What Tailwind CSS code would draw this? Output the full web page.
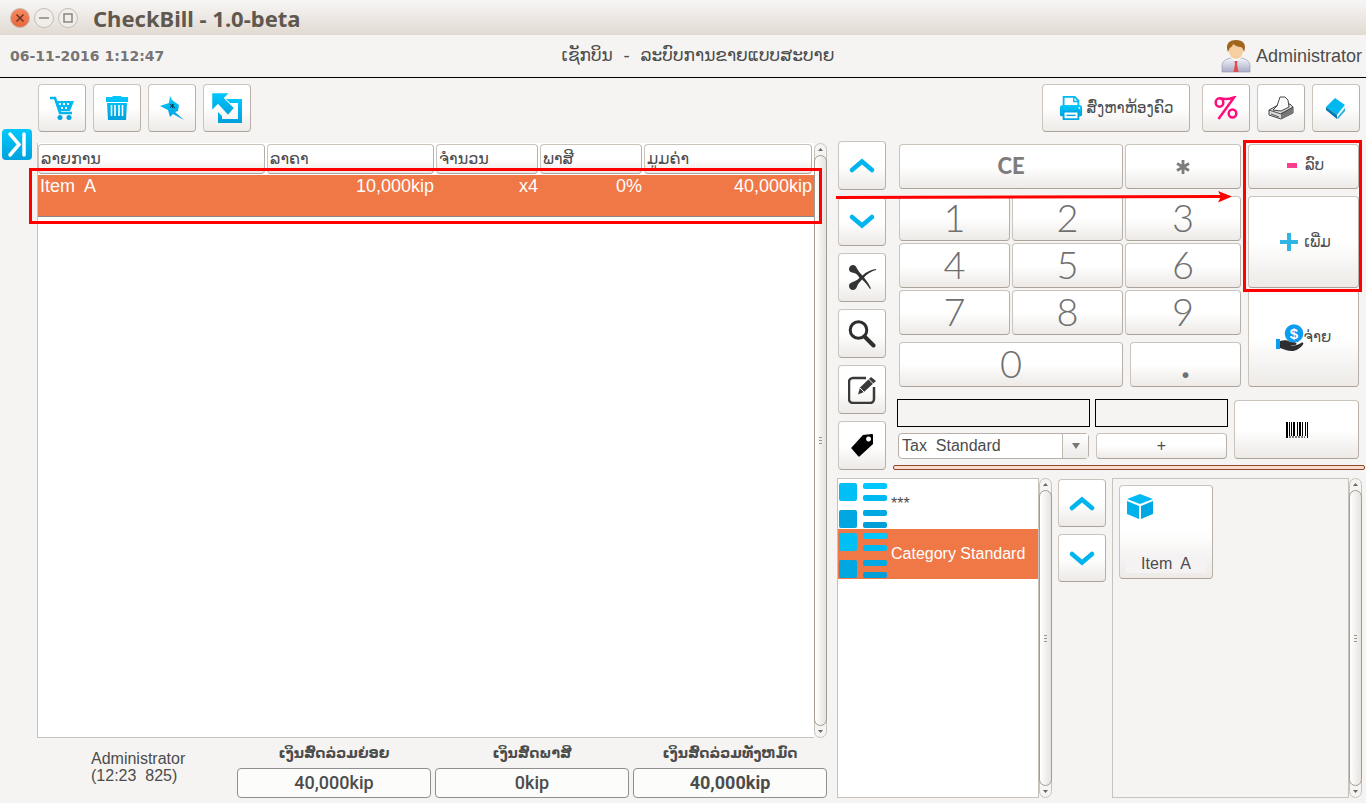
<!DOCTYPE html>
<html lang="lo">
<head>
    <meta charset="UTF-8">
    <meta name="viewport" content="width=device-width, initial-scale=1.0">
    <title>CheckBill - 1.0-beta</title>
    <script src="https://cdn.jsdelivr.net/npm/@tailwindcss/browser@4"></script>
    <script>
        document.addEventListener("DOMContentLoaded", () => {
            const raised = ["rounded-sm", "border", "border-[#cbc4bc]", "border-b-[#aba29a]", "border-r-[#b8b0a8]", "bg-linear-to-b", "from-white", "from-50%", "to-[#edeae7]"];

            // number keys
            const keys = document.getElementById("keys");
            for (let n = 1; n <= 9; n++) {
                const key = document.createElement("button");
                key.className = "raised h-[45px] pb-1 font-[Lato,sans-serif] text-[38px] leading-none font-light text-[#707070]";
                key.textContent = n;
                keys.appendChild(key);
            }

            document.querySelectorAll(".raised").forEach(el => el.classList.add(...raised));

            // scrollbars
            document.querySelectorAll(".scrollbar").forEach(bar => {
                bar.innerHTML = `
                    <svg class="mx-auto my-1 h-[3px] w-[5px] shrink-0" viewBox="0 0 5 3"><path d="M0 3h5L2.5 0z" fill="#6b6762"/></svg>
                    <div class="-mx-px flex flex-1 flex-col items-center justify-center gap-0.5 rounded-full border border-[#a39b92] bg-linear-to-r from-white to-[#e6e3df]">
                        <i class="h-px w-[3px] bg-[#9a958f]"></i><i class="h-px w-[3px] bg-[#9a958f]"></i><i class="h-px w-[3px] bg-[#9a958f]"></i>
                    </div>
                    <svg class="mx-auto my-1 h-[3px] w-[5px] shrink-0" viewBox="0 0 5 3"><path d="M0 0h5L2.5 3z" fill="#6b6762"/></svg>`;
            });
        });
    </script>
</head>
<body class="flex h-screen flex-col overflow-hidden bg-[#f5f4f2] font-['Liberation_Sans','DejaVu_Sans',sans-serif] text-[#4c4c4c]">
    <svg class="absolute h-0 w-0" aria-hidden="true">
        <defs>
            <linearGradient id="blue" x1="0" y1="0" x2="0" y2="1"><stop offset="0" stop-color="#00c8ff"/><stop offset="1" stop-color="#00a0dc"/></linearGradient>
            <linearGradient id="orange" x1="0" y1="0" x2="0" y2="1"><stop offset="0" stop-color="#f58a62"/><stop offset="1" stop-color="#e9663a"/></linearGradient>
            <linearGradient id="shirt" x1="0" y1="0" x2="0" y2="1"><stop offset="0" stop-color="#f3f4fa"/><stop offset="1" stop-color="#a9abc6"/></linearGradient>
            <g id="list-icon">
                <rect x="1" y="4" width="18" height="18" rx="2" fill="#00bff5"/><rect x="1" y="31" width="18" height="18" rx="2" fill="#00a6df"/>
                <rect x="25" y="4" width="24" height="6" rx="2" fill="#00c8ff"/><rect x="25" y="16" width="24" height="6" rx="2" fill="#00b9f0"/>
                <rect x="25" y="31" width="24" height="6" rx="2" fill="#00a9e2"/><rect x="25" y="43" width="24" height="6" rx="2" fill="#009fd8"/>
            </g>
            <path id="up" d="M2 12 12 3.500l10 8.500" fill="none" stroke="#00b4ee" stroke-width="4.500" stroke-linecap="round"/>
            <path id="down" d="M2 3l10 8.500L22 3" fill="none" stroke="#00b4ee" stroke-width="4.500" stroke-linecap="round"/>
        </defs>
    </svg>

    <!-- window title bar -->
    <div class="flex h-[35px] shrink-0 items-center rounded-t-lg bg-linear-to-b from-[#f7f6f5] to-[#e2dad2] pl-2">
        <svg class="h-6 w-[72px]" viewBox="0 0 72 24">
            <g stroke="#c4bcb4" fill="#f0eeeb"><circle cx="12" cy="12" r="9.500" fill="url(#orange)"/><circle cx="36" cy="12" r="9.500"/><circle cx="60" cy="12" r="9.500"/></g>
            <path d="M8.500 8.500l7 7M15.500 8.500l-7 7" stroke="#6a3424" stroke-width="1.500"/>
            <path d="M31 12h10M56 8h8v8h-8z" fill="none" stroke="#8b847b" stroke-width="1.500"/>
        </svg>
        <h1 class="ml-[13px] font-['Noto_Sans',sans-serif] text-[22px] leading-none font-bold text-[#5f584f]">CheckBill - 1.0-beta</h1>
    </div>

    <header class="grid h-[43px] shrink-0 grid-cols-3 items-center border-b border-black pr-1 pl-[10px]">
        <time class="font-['DejaVu_Sans',sans-serif] text-sm font-bold text-[#757575]">06-11-2016 1:12:47</time>
        <div class="pl-6 text-center font-['DejaVu_Sans',sans-serif] text-[17px] whitespace-nowrap">ເຊັກບິນ&nbsp; -&nbsp; ລະບົບການຂາຍແບບສະບາຍ</div>
        <div class="flex items-center justify-end gap-1">
            <svg class="h-9 w-8" viewBox="0 0 32 36">
                <path d="M2 34v-6c0-5 4-7 9-8h10c5 1 9 3 9 8v6z" fill="url(#shirt)" stroke="#9a9cb8" stroke-width=".7"/>
                <path d="M11 20l5 4 5-4-1-3h-8z" fill="#fff"/>
                <path d="M14.500 23h3l-.5 3 1.500 8h-5l1.500-8z" fill="#e34b4b"/>
                <ellipse cx="16" cy="13" rx="7" ry="8" fill="#f6cfa0"/>
                <path d="M8 14C5 6 9 2 16 2s11 4 8 12c-1-2-1-4-3-5-4 0-6-2-8-3 0 2-2 3-3 4-1 1-1 2-2 4z" fill="#a0661d"/>
            </svg>
            <span class="text-lg">Administrator</span>
        </div>
    </header>

    <main class="flex min-h-0 flex-1">
        <aside class="w-[37px] shrink-0 pt-[51px] pl-0.5">
            <button aria-label="Hide panel" class="block h-[31px] w-[30px] rounded-sm bg-linear-to-b from-[#00c8ff] to-[#00a2dc]">
                <svg viewBox="0 0 30 31"><path d="M8 5l9 10.500L8 26M22 5v21" fill="none" stroke="#fff" stroke-width="3.500" stroke-linecap="round"/></svg>
            </button>
        </aside>

        <div class="flex min-w-0 flex-1 flex-col pt-1.5">
            <div class="flex h-12 shrink-0 items-stretch gap-[7px] pr-1.5 pl-px">
                <button aria-label="New sale" class="raised flex w-12 items-center justify-center">
                    <svg class="h-6 w-6" viewBox="0 0 24 24"><path d="M0 2h5l5 15h12" fill="none" stroke="#00b4ee" stroke-width="2.500"/><path fill-rule="evenodd" d="M6 5h18l-4 10H9zM9 7v2h2V7zm4 0v2h2V7zm4 0v2h2V7zm-6 4v2h2v-2zm4 0v2h2v-2z" fill="#00b9f2"/><circle cx="10" cy="21.500" r="2.500" fill="#00a4e0"/><circle cx="19" cy="21.500" r="2.500" fill="#00a4e0"/></svg>
                </button>
                <button aria-label="Delete sale" class="raised flex w-12 items-center justify-center">
                    <svg class="h-6 w-6" viewBox="0 0 24 24"><path d="M1 1h6l1-1h8l1 1h6v5H1zM2 7h20l-1 17H3z" fill="url(#blue)"/><path d="M6.500 9v11M10 9v11M14 9v11M17.500 9v11" stroke="#fff" stroke-width="1.600"/></svg>
                </button>
                <button aria-label="Pin" class="raised flex w-12 items-center justify-center">
                    <svg class="h-6 w-6" viewBox="0 0 24 24"><path d="M10 0l2 4 7 5-1 6-3 1 9 8-11-6-3 3-2-7-8-4 9-3z" fill="url(#blue)"/><path d="M10 8l5 4M10 11.500l4-3M12.500 8v4" stroke="#0b3c50" stroke-width="1"/></svg>
                </button>
                <button aria-label="Split" class="raised flex w-12 items-center justify-center">
                    <svg class="h-8 w-8" viewBox="0 0 32 32"><path d="M15 7h16v24H7V20l4 4v3h16V11h-8z" fill="url(#blue)"/><path d="M1 1h17l-5 5 10 10-6 7L7 12l-6 6z" fill="url(#blue)" stroke="#fff" stroke-width=".5"/></svg>
                </button>
                <button class="raised mr-[5px] ml-auto flex w-[148px] items-center justify-center gap-1 font-['DejaVu_Sans',sans-serif] text-[15px]">
                    <svg class="h-6 w-6 shrink-0" viewBox="0 0 26 26"><path d="M5 1h12l4 4v6H5z" fill="#fff" stroke="#00b9f2" stroke-width="2"/><path d="M16 1v5h5" fill="none" stroke="#00b9f2" stroke-width="1.500"/><rect x="1" y="10" width="24" height="12" rx="2" fill="url(#blue)"/><path d="M5 17h16v8H5z" fill="#fff" stroke="#00a8e3" stroke-width="2"/><path d="M8 21h10" stroke="#00a8e3" stroke-width="1.500"/><circle cx="22" cy="13" r="1" fill="#fff"/></svg>
                    ສົ່ງຫາຫ້ອງຄົວ
                </button>
                <button aria-label="Discount" class="raised flex w-12 items-center justify-center">
                    <svg class="h-6 w-6" viewBox="0 0 24 24"><g fill="none" stroke="#ff0d7e" stroke-width="2.500"><ellipse cx="5.500" cy="6.500" rx="3.800" ry="4.300"/><ellipse cx="18.500" cy="17.500" rx="3.800" ry="4"/><path d="M6 2.200c4 1.500 8 1.300 14-.7L4.500 23"/></g></svg>
                </button>
                <button aria-label="Print" class="raised flex w-12 items-center justify-center">
                    <svg class="h-6 w-7" viewBox="0 0 28 24"><path d="M2 14l9-5 12-1 3 3v6l-12 6L2 19z" fill="#d9d9d9" stroke="#333" stroke-width=".9" stroke-linejoin="round"/><path d="M14 17l12-6v6l-12 6z" fill="#777"/><path d="M6 14l4-4 3-9h5l3 3 1 7-8 4z" fill="#fafafa" stroke="#333" stroke-width=".9" stroke-linejoin="round"/><path d="M2 14l12 4 12-7M4 18l8 3" fill="none" stroke="#333" stroke-width=".8"/></svg>
                </button>
                <button aria-label="Manual" class="raised flex w-12 items-center justify-center">
                    <svg class="h-6 w-6" viewBox="0 0 24 24"><path d="M11 2l10 7-8 10L2 11z" fill="#00b8f0"/><path d="M2 11l11 8v4L2 14z" fill="#0677a8"/><path d="M13 19l8-10 1 4-9 10z" fill="#e7f6fc"/><path d="M13 22l8-10v3l-7 8z" fill="#28abe0"/></svg>
                </button>
            </div>

            <div class="mt-[9px] flex min-h-0 flex-1 gap-[11px]">
                <!-- ticket lines and totals -->
                <section class="flex min-w-0 flex-1 flex-col pt-0.5">
                    <div class="relative flex min-h-0 flex-1">
                        <div class="min-w-0 flex-1 border-b border-l border-[#c8c2ba] bg-white">
                            <table class="w-full table-fixed border-collapse text-lg">
                                <colgroup><col class="w-[229px]"><col class="w-[169px]"><col class="w-[104px]"><col class="w-[104px]"><col></colgroup>
                                <thead class="font-['DejaVu_Sans',sans-serif] text-base leading-7">
                                    <tr class="text-left">
                                        <th class="p-0 py-px pr-0.5 font-normal"><div class="raised h-[30px] px-0.5">ລາຍການ</div></th>
                                        <th class="p-0 py-px pr-0.5 font-normal"><div class="raised h-[30px] px-0.5">ລາຄາ</div></th>
                                        <th class="p-0 py-px pr-0.5 font-normal"><div class="raised h-[30px] px-0.5">ຈຳນວນ</div></th>
                                        <th class="p-0 py-px pr-0.5 font-normal"><div class="raised h-[30px] px-0.5">ພາສີ</div></th>
                                        <th class="p-0 py-px pr-0.5 font-normal"><div class="raised h-[30px] px-0.5">ມູມຄ່າ</div></th>
                                    </tr>
                                </thead>
                                <tbody>
                                    <tr class="h-[41px] border-b border-[#8b8782] bg-[#f07746] text-right align-top leading-[22px] text-white">
                                        <td class="p-0 pl-0.5 text-left">Item&nbsp; A</td>
                                        <td class="p-0 pr-0.5">10,000kip</td>
                                        <td class="p-0 pr-0.5">x4</td>
                                        <td class="p-0 pr-0.5">0%</td>
                                        <td class="p-0 pr-0.5">40,000kip</td>
                                    </tr>
                                </tbody>
                            </table>
                        </div>
                        <div class="scrollbar flex w-[13px] flex-col rounded-full border border-[#c8c2ba] bg-[#f5f4f2]"></div>
                        <div class="pointer-events-none absolute top-[25px] right-[5px] -left-2 h-14 border-3 border-[#f00]"></div>
                    </div>

                    <div class="grid h-[65px] shrink-0 grid-cols-[196px_1fr_1fr_1fr] gap-1">
                        <p class="pt-3 pl-[54px] text-base leading-[17px]">Administrator<br>(12:23&nbsp; 825)</p>
                        <div class="text-center">
                            <div id="subtotal-label" class="h-[30px] font-['DejaVu_Sans',sans-serif] text-sm leading-[30px] font-bold whitespace-nowrap">ເງິນສົດລ່ວມຍ່ອຍ</div>
                            <output aria-labelledby="subtotal-label" class="block h-[30px] rounded-sm border border-[#8f8f8f] bg-[#fcfdfa] font-[Roboto,sans-serif] text-lg leading-7 font-medium">40,000kip</output>
                        </div>
                        <div class="text-center">
                            <div id="tax-label" class="h-[30px] font-['DejaVu_Sans',sans-serif] text-sm leading-[30px] font-bold whitespace-nowrap">ເງິນສົດພາສີ</div>
                            <output aria-labelledby="tax-label" class="block h-[30px] rounded-sm border border-[#8f8f8f] bg-[#fcfdfa] font-[Roboto,sans-serif] text-lg leading-7 font-medium">0kip</output>
                        </div>
                        <div class="text-center">
                            <div id="total-label" class="h-[30px] font-['DejaVu_Sans',sans-serif] text-sm leading-[30px] font-bold whitespace-nowrap">ເງິນສົດລ່ວມທັງຫມົດ</div>
                            <output aria-labelledby="total-label" class="block h-[30px] rounded-sm border border-[#8f8f8f] bg-[#fcfdfa] font-[Roboto,sans-serif] text-lg leading-7 font-bold">40,000kip</output>
                        </div>
                    </div>
                </section>

                <!-- keypad and catalogue -->
                <section class="relative flex w-[528px] shrink-0 flex-col">
                    <div class="flex">
                        <div class="flex w-12 shrink-0 flex-col gap-[7px]">
                            <button aria-label="Line up" class="raised flex h-[49px] items-center justify-center"><svg class="h-[15px] w-6 overflow-visible" viewBox="0 0 24 15"><use href="#up"/></svg></button>
                            <button aria-label="Line down" class="raised flex h-[49px] items-center justify-center"><svg class="h-[15px] w-6 overflow-visible" viewBox="0 0 24 15"><use href="#down"/></svg></button>
                            <button aria-label="Remove line" class="raised flex h-[49px] items-center justify-center">
                                <svg class="h-7 w-7" viewBox="0 0 28 28"><path d="M5 1c3 0 3.500 3 5 5 1 2 3 4 4.500 5.500C18 8 23 5.500 28 5v1c-5 1.500-9 4-12 7.500 3 3.500 5 7 7 11l-1 .5c-2.500-4-5-7-8-9.500-2 2.500-4 4-5 7-.6 2-2 3.500-4 3.500-2.500 0-4-2-4-4 0-3 3-3.500 5-4.500 2-1 4-2 5.500-3.500C10 11 8 9.500 6 9 3.500 8.500 1 8 1 5c0-2 2-4 4-4z" fill="#333"/></svg>
                            </button>
                            <button aria-label="Find product" class="raised flex h-[49px] items-center justify-center">
                                <svg class="h-7 w-7" viewBox="0 0 28 28"><circle cx="10.500" cy="10" r="8.300" fill="none" stroke="#2d2d2d" stroke-width="3"/><path d="M16.500 16.500l9 9" stroke="#2d2d2d" stroke-width="4" stroke-linecap="round"/></svg>
                            </button>
                            <button aria-label="Edit line" class="raised flex h-[49px] items-center justify-center">
                                <svg class="h-7 w-7" viewBox="0 0 28 28"><path d="M18 2H5a4 4 0 0 0-4 4v17a4 4 0 0 0 4 4h17a4 4 0 0 0 4-4V11" fill="none" stroke="#3a3a3a" stroke-width="2.500"/><path d="M10 18.500l2-7L23 1l5 4-12 11z" fill="#3a3a3a"/><path d="M20.500 3l5 5M12 12l4 4" stroke="#fff" stroke-width="1"/></svg>
                            </button>
                            <button aria-label="Attributes" class="raised flex h-[49px] items-center justify-center">
                                <svg class="h-7 w-7" viewBox="0 0 28 28"><path fill-rule="evenodd" d="M15 3l9-1c1 0 1 1 1 1v9L12 24c-1 1-1 1-2 0l-6-7c-1-1-1-1 0-2zM20.500 4.500a2.500 2.500 0 1 0 .1 0z" fill="#000"/></svg>
                            </button>
                        </div>

                        <div class="min-w-0 flex-1 pt-[3px] pl-[11px] text-[#707070]">
                            <div class="flex gap-[7px] pl-0.5">
                                <div class="w-[342px]">
                                    <div class="grid grid-cols-[224px_116px] gap-0.5 font-[Lato,sans-serif] text-[22px] font-black text-[#7d7d7d]">
                                        <button class="raised h-[45px] pb-0.5">CE</button>
                                        <button class="raised flex h-[45px] items-center justify-center" aria-label="Multiply"><svg class="h-4 w-4" viewBox="0 0 16 16"><path d="M8 1v14M2 4.500l12 7M14 4.500l-12 7" stroke="#7d7d7d" stroke-width="2.800"/></svg></button>
                                    </div>
                                    <div id="keys" class="mt-[7px] grid grid-cols-[111px_111px_116px] gap-0.5"></div>
                                    <div class="mt-[7px] grid grid-cols-[224px_111px] gap-[7px] font-[Lato,sans-serif] text-[38px] leading-none font-light">
                                        <button class="raised h-[45px] pb-1">0</button>
                                        <button class="raised h-[45px] pb-1 font-bold">.</button>
                                    </div>
                                </div>
                                <div class="relative flex w-[111px] flex-col font-['DejaVu_Sans',sans-serif] text-[15px] text-[#4c4c4c]">
                                    <button class="raised flex h-[45px] items-center justify-center gap-2 pb-0.5 pl-1"><i class="h-[5px] w-[10px] bg-[#ff3f8e]"></i>ລົບ</button>
                                    <button class="raised mt-[7px] flex h-[92px] items-center justify-center gap-1.5 pl-1">
                                        <svg class="h-5 w-[18px]" viewBox="0 0 18 20"><path d="M7 1h4v7h7v4h-7v7H7v-7H0V8h7z" fill="#2fb6e4"/></svg>ເພີ່ມ
                                    </button>
                                    <button class="raised mt-0.5 flex h-[97px] items-center justify-center pb-0.5">
                                        <svg class="h-7 w-7" viewBox="0 0 28 28"><circle cx="18" cy="9.500" r="9.300" fill="#0a9df0"/><text x="18" y="15" text-anchor="middle" font-family="Liberation Sans" font-size="15" font-weight="bold" fill="#fff">$</text><path d="M0 15h4v10H0z" fill="#0a9df0"/><path d="M4 17c4-1 8-1 10 1l5 .5c2 .5 2 2 0 2.500h-5c4 1 8 0 11-2 2-1 3 0 2 1.500-3 4-7 6.500-11 6.500-5 0-8-2-12-3z" fill="#2e2e30"/></svg>ຈ່າຍ
                                    </button>
                                    <div class="pointer-events-none absolute -top-1 -right-[3px] -left-[5px] h-[152px] border-3 border-[#f00]"></div>
                                </div>
                            </div>

                            <div class="mt-3 flex gap-1.5 text-[#4c4c4c]">
                                <div class="grid grid-cols-[193px_133px] gap-x-[5px] gap-y-1.5">
                                    <input aria-label="Quantity" class="h-7 border border-black px-1">
                                    <input aria-label="Price" class="h-7 border border-black px-1">
                                    <div class="relative mx-px">
                                        <select aria-label="Tax" class="h-[26px] w-full appearance-none rounded-sm border border-[#b8b0a8] bg-white pl-[3px] text-base leading-none"><option>Tax&nbsp; Standard</option></select>
                                        <span class="pointer-events-none absolute inset-y-px right-px flex w-[26px] items-center justify-center border-l border-[#c0b9b1] bg-linear-to-b from-white to-[#edeae7]"><svg class="h-[6px] w-2" viewBox="0 0 8 6"><path d="M0 0h8L4 6z" fill="#777"/></svg></span>
                                    </div>
                                    <button class="raised mx-px h-[26px] text-base leading-none">+</button>
                                </div>
                                <button aria-label="Scan barcode" class="raised mt-px flex h-[59px] w-[125px] items-center justify-center">
                                    <svg class="h-4 w-[22px]" viewBox="0 0 22 16" fill="#000"><path d="M0 0h2v16H0zM3 0h1v14H3zM5 0h1v14H5zM7 0h2v14H7zM11 0h1v14h-1zM13 0h2v14h-2zM16 0h1v14h-1zM19 0h1v14h-1zM21 0h1v16h-1z"/><path d="M3 15h16" stroke="#000" stroke-dasharray="2 1"/></svg>
                                </button>
                            </div>
                            <div class="mt-1.5 mr-px -ml-1 h-[5px] rounded-xs border border-[#8f4630] bg-[#fbdccb]"></div>
                        </div>
                    </div>

                    <div class="mt-2 mb-[5px] -ml-px flex min-h-0 flex-1">
                        <div class="w-[202px] border border-[#c8c2ba] bg-white text-base">
                            <button class="flex h-[50px] w-full items-center text-left"><svg class="h-[50px] w-[50px] shrink-0" viewBox="0 0 50 50"><use href="#list-icon"/></svg><span class="ml-[3px]">***</span></button>
                            <button class="flex h-[50px] w-full items-center bg-[#f07746] text-left text-white"><svg class="h-[50px] w-[50px] shrink-0" viewBox="0 0 50 50"><use href="#list-icon"/></svg><span class="ml-[3px] whitespace-nowrap">Category Standard</span></button>
                        </div>
                        <div class="scrollbar flex w-[13px] flex-col rounded-full border border-[#c8c2ba] bg-[#f5f4f2]"></div>
                        <div class="mx-1.5 flex w-12 shrink-0 flex-col gap-[7px] pt-px">
                            <button aria-label="Category up" class="raised flex h-12 items-center justify-center"><svg class="h-[15px] w-6 overflow-visible" viewBox="0 0 24 15"><use href="#up"/></svg></button>
                            <button aria-label="Category down" class="raised flex h-12 items-center justify-center"><svg class="h-[15px] w-6 overflow-visible" viewBox="0 0 24 15"><use href="#down"/></svg></button>
                        </div>
                        <div class="min-w-0 flex-1 border border-[#c8c2ba] p-1.5">
                            <button class="raised flex h-[94px] w-[94px] flex-col justify-between px-1.5 pt-[7px] pb-[5px]">
                                <svg class="h-[27px] w-[28px]" viewBox="0 0 28 27"><path d="M1 6l13-5 13 5-13 5z" fill="#00b9f5"/><path d="M1 8l12 5v13L1 21z" fill="#00b2ec"/><path d="M27 8l-12 5v13l12-5z" fill="#00a8e3"/></svg>
                                <span class="block w-full bg-[#f4f2f2] text-center text-base leading-[18px]">Item&nbsp; A</span>
                            </button>
                        </div>
                        <div class="scrollbar mr-1 flex w-[13px] flex-col rounded-full border border-[#c8c2ba] bg-[#f5f4f2]"></div>
                    </div>

                    <svg class="pointer-events-none absolute top-[49px] -left-0.5 h-[14px] w-[398px]" viewBox="0 0 398 14"><path d="M0 7.500L386 6.500" stroke="#f00" stroke-width="3"/><path d="M382 1l14 5.500-14 6 3-6z" fill="#f00"/></svg>
                </section>
            </div>
        </div>
    </main>
</body>
</html>
